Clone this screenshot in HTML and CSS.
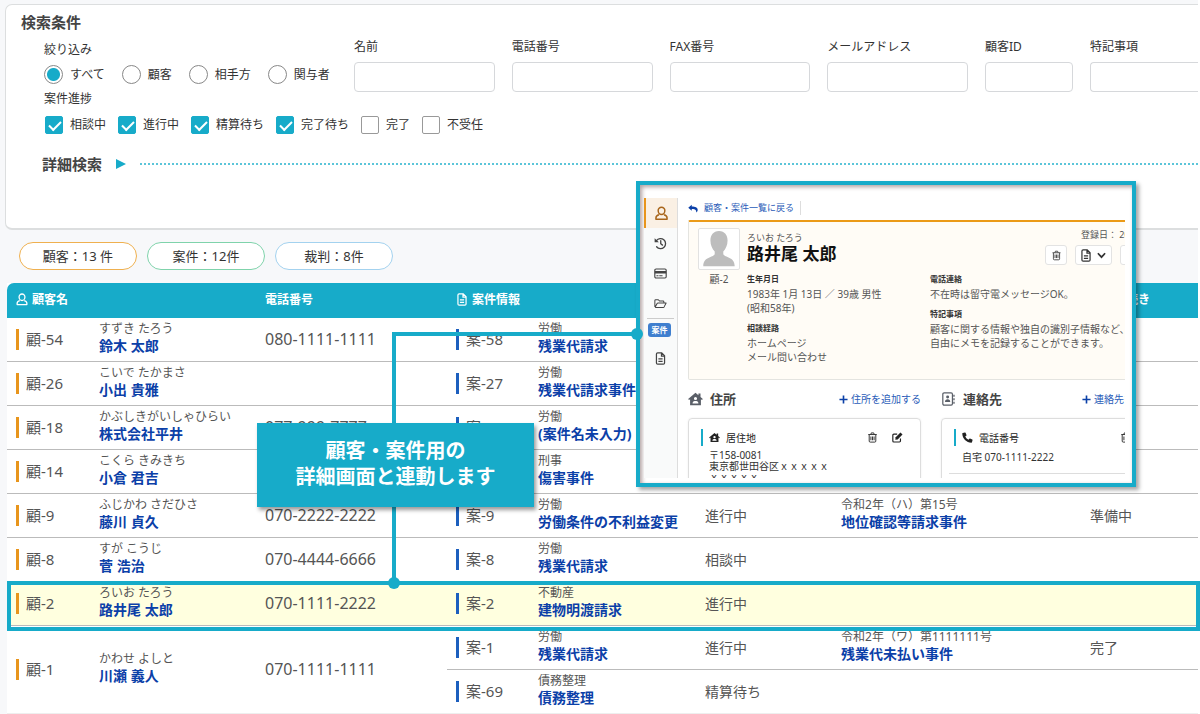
FILE: index.html
```html
<!DOCTYPE html>
<html lang="ja">
	<head>
		<meta charset="utf-8">
		<title>顧客・案件一覧</title>
		<link rel="stylesheet" href="styles.css">
	</head>
	<body>
		<!-- shared icons -->
		<svg class="sprite" xmlns="http://www.w3.org/2000/svg">
			<symbol id="i-user" viewBox="0 0 14 16">
				<path d="M7 1.200A3.600 3.600 0 0 1 10.600 4.900C10.600 7.200 9 9.200 7 9.200S3.400 7.200 3.400 4.900A3.600 3.600 0 0 1 7 1.200Z M4.300 9.300C2.300 9.800 1 11 1 12.800V14.300H13V12.800C13 11 11.700 9.800 9.700 9.300" fill="none" stroke="currentColor" stroke-width="1.600" stroke-linejoin="round"/>
			</symbol>
			<symbol id="i-doc" viewBox="0 0 12 16">
				<path d="M2.500 1H7.500L11 4.500V13.500A1.500 1.500 0 0 1 9.500 15H2.500A1.500 1.500 0 0 1 1 13.500V2.500A1.500 1.500 0 0 1 2.500 1Z M7.200 1V5H11 M3.400 8.500H8.600 M3.400 11.500H8.600" fill="none" stroke="currentColor" stroke-width="1.500"/>
			</symbol>
			<symbol id="i-history" viewBox="0 0 16 16">
				<path d="M3 4.500A6.200 6.200 0 1 1 3.200 12 M8.300 4.500V8.300L10.500 10" fill="none" stroke="currentColor" stroke-width="1.600" stroke-linecap="round"/>
				<path d="M.8 1.500V6.600H6Z" fill="currentColor"/>
			</symbol>
			<symbol id="i-card" viewBox="0 0 16 14">
				<rect x="1" y="1.500" width="14" height="11" rx="1.500" fill="none" stroke="currentColor" stroke-width="1.400"/>
				<path d="M1 4H15V7H1Z M3 9.300H5.500V10.500H3Z M6.500 9.300H10.500V10.500H6.500Z" fill="currentColor"/>
			</symbol>
			<symbol id="i-folder" viewBox="0 0 18 14">
				<path d="M1.200 12V3A1.200 1.200 0 0 1 2.400 1.800H6L7.800 3.600H12.500A1.200 1.200 0 0 1 13.700 4.800V6.200 M1.500 12.300L4.500 6.800Q4.900 6.200 5.500 6.200H16.800L14 11.700Q13.600 12.400 13 12.400H1.500" fill="none" stroke="currentColor" stroke-width="1.400" stroke-linejoin="round"/>
			</symbol>
			<symbol id="i-reply" viewBox="0 0 16 14">
				<path d="M.4 5.600L6 .8V3.600C11.500 3.700 15.500 5 15.500 9C15.500 11 14.500 12.500 13 13.500C13.800 10 12 8 6 7.900V10.500Z" fill="currentColor"/>
			</symbol>
			<symbol id="i-trash" viewBox="0 0 14 16">
				<path d="M.8 3.700H13.200 M4.500 3.500L5.300 1.300H8.700L9.500 3.500 M2.200 4V13.200A1.500 1.500 0 0 0 3.700 14.700H10.300A1.500 1.500 0 0 0 11.800 13.200V4 M4.700 6.500V12 M7 6.500V12 M9.300 6.500V12" fill="none" stroke="currentColor" stroke-width="1.300"/>
			</symbol>
			<symbol id="i-edit" viewBox="0 0 16 16">
				<path d="M12.300 9.500V13A1.500 1.500 0 0 1 10.800 14.500H2.700A1.500 1.500 0 0 1 1.200 13V4.700A1.500 1.500 0 0 1 2.700 3.200H7.500" fill="none" stroke="currentColor" stroke-width="1.700"/>
				<path d="M12.300.8L15.300 3.800L8.300 10.800L4.800 11.300L5.300 7.800Z" fill="currentColor"/>
			</symbol>
			<symbol id="i-home" viewBox="0 0 18 16">
				<path fill-rule="evenodd" d="M9 .5L12.500 3.400V1.500H15V5.600L17.800 8L16.800 9.200L15.500 8.200V15.500H2.500V8.200L1.200 9.200L.2 8ZM9 5.500A1.900 1.900 0 1 0 9 9.300A1.900 1.900 0 1 0 9 5.500ZM5.500 13.500H12.500C12.500 11.500 11.500 10.300 10 10.300H8C6.500 10.300 5.500 11.500 5.500 13.500Z" fill="currentColor"/>
			</symbol>
			<symbol id="i-book" viewBox="0 0 15 16">
				<rect x="1" y="1" width="11" height="14" rx="1.500" fill="none" stroke="currentColor" stroke-width="1.400"/>
				<path d="M6.500 4A1.700 1.700 0 1 1 6.500 7.400A1.700 1.700 0 1 1 6.500 4Z M3.500 11.500C3.500 9.300 4.500 8.300 6.500 8.300S9.500 9.300 9.500 11.500Z M13 3H14.500V5.500H13Z M13 7H14.500V9.500H13Z M13 11H14.500V13.500H13Z" fill="currentColor"/>
			</symbol>
			<symbol id="i-phone" viewBox="0 0 16 16">
				<path d="M1 1.500L4.200.6Q4.900.4 5.200 1.100L6.500 4.300Q6.700 4.900 6.200 5.300L4.700 6.600Q6.300 9.800 9.400 11.300L10.700 9.800Q11.100 9.300 11.700 9.500L14.900 10.800Q15.600 11.100 15.400 11.800L14.500 15Q14.300 15.600 13.700 15.600C6.500 15.600.4 9.500.4 2.300Q.4 1.700 1 1.500Z" fill="currentColor"/>
			</symbol>
			<symbol id="i-plus" viewBox="0 0 10 10">
				<path d="M5 .5V9.500 M.5 5H9.500" stroke="currentColor" stroke-width="1.800"/>
			</symbol>
			<symbol id="i-chevron" viewBox="0 0 10 8">
				<path d="M1 1.500L5 5.800L9 1.500" fill="none" stroke="currentColor" stroke-width="1.900"/>
			</symbol>
		</svg>

		<div class="stage">
			<form class="search">
				<h2>検索条件</h2>
				<div class="search-top">
					<fieldset class="target">
						<legend>絞り込み</legend>
						<div class="choices radios">
							<label><input type="radio" name="target" checked>すべて</label>
							<label><input type="radio" name="target">顧客</label>
							<label><input type="radio" name="target">相手方</label>
							<label><input type="radio" name="target">関与者</label>
						</div>
					</fieldset>
					<div class="fields">
						<label>名前<input type="text"></label>
						<label>電話番号<input type="text"></label>
						<label>FAX番号<input type="text"></label>
						<label>メールアドレス<input type="text"></label>
						<label>顧客ID<input type="text"></label>
						<label>特記事項<input type="text" class="cut"></label>
					</div>
				</div>
				<fieldset class="progress">
					<legend>案件進捗</legend>
					<div class="choices checks">
						<label><input type="checkbox" checked>相談中</label>
						<label><input type="checkbox" checked>進行中</label>
						<label><input type="checkbox" checked>精算待ち</label>
						<label><input type="checkbox" checked>完了待ち</label>
						<label><input type="checkbox">完了</label>
						<label><input type="checkbox">不受任</label>
					</div>
				</fieldset>
				<div class="detail">
					<h3>詳細検索</h3>
					<span class="arrow"></span>
					<span class="dots"></span>
				</div>
			</form>

			<div class="tallies">
				<span class="tally orange">顧客：13 件</span>
				<span class="tally green">案件：12件</span>
				<span class="tally blue">裁判：8件</span>
			</div>

			<table class="list">
				<colgroup>
					<col class="c-id">
					<col class="c-name">
					<col class="c-phone">
					<col class="c-case">
					<col class="c-matter">
					<col class="c-status">
					<col class="c-court">
					<col>
				</colgroup>
				<thead>
					<tr>
						<th colspan="2" class="pad"><svg><use href="#i-user"/></svg>顧客名</th>
						<th>電話番号</th>
						<th colspan="2" class="pad"><svg><use href="#i-doc"/></svg>案件情報</th>
						<th></th>
						<th></th>
						<th>裁判手続き</th>
					</tr>
				</thead>
				<tbody>
					<tr>
						<td class="pad"><span class="id">顧-54</span></td>
						<td><small>すずき たろう</small><a href="#">鈴木 太郎</a></td>
						<td class="tel">080-1111-1111</td>
						<td class="pad"><span class="id case">案-58</span></td>
						<td><small>労働</small><a href="#">残業代請求</a></td>
						<td></td>
						<td></td>
						<td></td>
					</tr>
					<tr>
						<td class="pad"><span class="id">顧-26</span></td>
						<td><small>こいで たかまさ</small><a href="#">小出 貴雅</a></td>
						<td class="tel"></td>
						<td class="pad"><span class="id case">案-27</span></td>
						<td><small>労働</small><a href="#">残業代請求事件</a></td>
						<td></td>
						<td></td>
						<td></td>
					</tr>
					<tr>
						<td class="pad"><span class="id">顧-18</span></td>
						<td><small>かぶしきがいしゃひらい</small><a href="#">株式会社平井</a></td>
						<td class="tel">077-999-7777</td>
						<td class="pad"><span class="id case">案-20</span></td>
						<td><small>労働</small><a href="#">(案件名未入力)</a></td>
						<td></td>
						<td></td>
						<td></td>
					</tr>
					<tr>
						<td class="pad"><span class="id">顧-14</span></td>
						<td><small>こくら きみきち</small><a href="#">小倉 君吉</a></td>
						<td class="tel"></td>
						<td class="pad"></td>
						<td><small>刑事</small><a href="#">傷害事件</a></td>
						<td></td>
						<td></td>
						<td></td>
					</tr>
					<tr>
						<td class="pad"><span class="id">顧-9</span></td>
						<td><small>ふじかわ さだひさ</small><a href="#">藤川 貞久</a></td>
						<td class="tel">070-2222-2222</td>
						<td class="pad"><span class="id case">案-9</span></td>
						<td><small>労働</small><a href="#">労働条件の不利益変更</a></td>
						<td>進行中</td>
						<td><small>令和2年（ハ）第15号</small><a href="#">地位確認等請求事件</a></td>
						<td>準備中</td>
					</tr>
					<tr>
						<td class="pad"><span class="id">顧-8</span></td>
						<td><small>すが こうじ</small><a href="#">菅 浩治</a></td>
						<td class="tel">070-4444-6666</td>
						<td class="pad"><span class="id case">案-8</span></td>
						<td><small>労働</small><a href="#">残業代請求</a></td>
						<td>相談中</td>
						<td></td>
						<td></td>
					</tr>
					<tr class="picked">
						<td class="pad"><span class="frame"></span><span class="id">顧-2</span></td>
						<td><small>ろいお たろう</small><a href="#">路井尾 太郎</a></td>
						<td class="tel">070-1111-2222</td>
						<td class="pad"><span class="id case">案-2</span></td>
						<td><small>不動産</small><a href="#">建物明渡請求</a></td>
						<td>進行中</td>
						<td></td>
						<td></td>
					</tr>
					<tr>
						<td rowspan="2" class="pad"><span class="id">顧-1</span></td>
						<td rowspan="2"><small>かわせ よしと</small><a href="#">川瀬 義人</a></td>
						<td rowspan="2" class="tel">070-1111-1111</td>
						<td class="pad"><span class="id case">案-1</span></td>
						<td><small>労働</small><a href="#">残業代請求</a></td>
						<td>進行中</td>
						<td><small>令和2年（ワ）第1111111号</small><a href="#">残業代未払い事件</a></td>
						<td>完了</td>
					</tr>
					<tr>
						<td class="pad"><span class="id case">案-69</span></td>
						<td><small>債務整理</small><a href="#">債務整理</a></td>
						<td>精算待ち</td>
						<td></td>
						<td></td>
					</tr>
				</tbody>
			</table>

			<!-- line from the picked row to the detail window -->
			<div class="wire"></div>
			<p class="callout">顧客・案件用の<br>詳細画面と連動します</p>

			<section class="popup">
				<div class="view">
					<nav class="side">
						<a href="#" class="on" aria-label="顧客"><svg class="s-user"><use href="#i-user"/></svg></a>
						<a href="#" aria-label="履歴"><svg><use href="#i-history"/></svg></a>
						<a href="#" aria-label="会計"><svg><use href="#i-card"/></svg></a>
						<a href="#" aria-label="フォルダ"><svg><use href="#i-folder"/></svg></a>
						<span class="badge">案件</span>
						<a href="#" aria-label="書類"><svg><use href="#i-doc"/></svg></a>
					</nav>
					<div class="main">
						<a href="#" class="back"><svg><use href="#i-reply"/></svg>顧客・案件一覧に戻る</a>
						<div class="profile">
							<div class="face">
								<svg viewBox="0 0 42 42">
									<path d="M21 2C27 2 30 6.500 30 12C30 17 28 21 25.500 23.500V26.500C27 30 37.500 29 37.500 39H4.500C4.500 29 15 30 16.500 26.500V23.500C14 21 12 17 12 12C12 6.500 15 2 21 2Z" fill="#bdbdbd"/>
								</svg>
								<span>顧-2</span>
							</div>
							<div class="about">
								<div class="about-head">
									<div>
										<p class="kana">ろいお たろう</p>
										<h1>路井尾 太郎</h1>
									</div>
									<div class="tools">
										<p>登録日： 20</p>
										<div>
											<button type="button" aria-label="削除"><svg><use href="#i-trash"/></svg></button>
											<button type="button" class="wide" aria-label="書類"><svg class="t-doc"><use href="#i-doc"/></svg><svg><use href="#i-chevron"/></svg></button>
											<button type="button" class="wide" aria-label="その他"></button>
										</div>
									</div>
								</div>
								<div class="facts">
									<dl>
										<dt>生年月日</dt>
										<dd>1983年 1月 13日 ／ 39歳 男性<br>(昭和58年)</dd>
										<dt>相談経路</dt>
										<dd>ホームページ<br>メール問い合わせ</dd>
									</dl>
									<dl>
										<dt>電話連絡</dt>
										<dd>不在時は留守電メッセージOK。</dd>
										<dt>特記事項</dt>
										<dd>顧客に関する情報や独自の識別子情報など、<br>自由にメモを記録することができます。</dd>
									</dl>
								</div>
							</div>
						</div>
						<div class="blocks">
							<div>
								<div class="block-head">
									<svg><use href="#i-home"/></svg>
									<h4>住所</h4>
									<a href="#"><svg><use href="#i-plus"/></svg>住所を追加する</a>
								</div>
								<div class="card">
									<div class="card-head">
										<svg><use href="#i-home"/></svg>
										<span>居住地</span>
										<svg class="act"><use href="#i-trash"/></svg>
										<svg><use href="#i-edit"/></svg>
									</div>
									<p class="address">〒158-0081<br>東京都世田谷区ｘｘｘｘｘ<br>ｘｘｘｘｘ</p>
								</div>
							</div>
							<div>
								<div class="block-head">
									<svg><use href="#i-book"/></svg>
									<h4>連絡先</h4>
									<a href="#"><svg><use href="#i-plus"/></svg>連絡先を追加する</a>
								</div>
								<div class="card">
									<div class="card-head">
										<svg><use href="#i-phone"/></svg>
										<span>電話番号</span>
										<svg class="act"><use href="#i-trash"/></svg>
										<svg><use href="#i-edit"/></svg>
									</div>
									<p class="number">自宅 070-1111-2222</p>
								</div>
							</div>
						</div>
					</div>
				</div>
			</section>
		</div>
	</body>
</html>
```
FILE: styles.css
```css
* {
	box-sizing: border-box;
}
body {
	margin: 0;
	background: #fff;
	color: #333;
	font-family: "Noto Sans", "Noto Sans CJK JP", sans-serif;
	font-size: 12px;
	overflow: hidden;
}
h1,
h2,
h3,
h4,
p,
dl,
dd {
	margin: 0;
}
a {
	color: #0b40a8;
	text-decoration: none;
}
fieldset {
	border: none;
	margin: 0;
	padding: 0;
	min-width: 0;
}
legend {
	padding: 0;
}
.sprite {
	display: none;
}
.stage {
	position: relative;
	margin-right: 2px;
	padding: 4px 0 0 5px;
	background: #f7f8fa;
}

/* search panel */
.search {
	border: 1px solid #dcdedf;
	border-bottom-width: 2px;
	border-right: none;
	border-radius: 7px 0 0 7px;
	background: #fff;
	padding: 8px 0 55px 38px;
}
.search h2,
.search h3 {
	font-size: 15px;
	line-height: 18px;
	color: #444;
}
.search h2 {
	margin-left: -23px;
}
.search-top {
	display: flex;
	margin-top: 8px;
}
.target {
	flex: 0 0 310px;
}
.target legend {
	padding-top: 3px;
	line-height: 16px;
}
.choices {
	display: flex;
}
.choices label {
	display: flex;
	align-items: center;
	gap: 7px;
	line-height: 18px;
	white-space: nowrap;
}
.choices input {
	appearance: none;
	margin: 0;
	border: 1px solid #888;
	background: #fff;
}
.radios {
	gap: 17px;
	margin-top: 7px;
}
.radios input {
	width: 19px;
	height: 19px;
	border-radius: 50%;
}
.radios input:checked {
	background: radial-gradient(circle, #17abc9 6px, #fff 7px);
}
.fields {
	flex: 1;
	display: grid;
	grid-template-columns: repeat(4, 1fr) 88px 108px;
	gap: 17px;
}
.fields label {
	line-height: 16px;
}
.fields input {
	display: block;
	width: 100%;
	height: 30px;
	margin-top: 7px;
	border: 1px solid #d6d8db;
	border-radius: 4px;
	background: #fff;
}
.fields .cut {
	border-right: none;
	border-radius: 4px 0 0 4px;
}
.progress legend {
	line-height: 14px;
}
.checks {
	gap: 12px;
	margin: 10px 0 0 1px;
}
.checks input {
	width: 18px;
	height: 18px;
	border-color: #999;
	border-radius: 2px;
}
.checks input:checked {
	border-color: #17abc9;
	background: #17abc9;
	position: relative;
}
.checks input:checked::after {
	content: "";
	position: absolute;
	left: 3px;
	top: 4px;
	width: 10px;
	height: 5px;
	border-left: 2px solid #fff;
	border-bottom: 2px solid #fff;
	transform: rotate(-45deg);
}
.detail {
	display: flex;
	align-items: center;
	margin: 21px 0 0 -2px;
}
.arrow {
	border: 5px solid transparent;
	border-left: 10px solid #17abc9;
	border-right: none;
	margin: 0 14px;
}
.dots {
	flex: 1;
	border-top: 2px dotted #5cc5d9;
}

/* counts */
.tallies {
	display: flex;
	gap: 10px;
	padding: 12px 14px 13px;
}
.tally {
	width: 118px;
	height: 28px;
	border: 1px solid;
	border-radius: 14px;
	background: #fff;
	font-size: 13px;
	line-height: 26px;
	text-align: center;
}
.orange {
	border-color: #efb04f;
}
.green {
	border-color: #7fd3ab;
}
.blue {
	border-color: #a3d2ef;
}

/* list */
.list {
	width: calc(100% - 2px);
	margin-left: 2px;
	table-layout: fixed;
	border-collapse: separate;
	border-spacing: 0;
	background: #fff;
	color: #555;
	font-size: 14px;
}
.c-id {
	width: 92px;
}
.c-name {
	width: 166px;
}
.c-phone {
	width: 182px;
}
.c-case {
	width: 91px;
}
.c-matter {
	width: 167px;
}
.c-status {
	width: 136px;
}
.c-court {
	width: 249px;
}
.list th {
	height: 35px;
	padding: 0 0 3px;
	background: #17abc9;
	color: #fff;
	font-size: 12px;
	text-align: left;
}
.list th:first-child {
	border-radius: 7px 0 0 0;
}
.list th svg {
	width: 12px;
	height: 13px;
	margin-right: 4px;
	vertical-align: -2px;
}
.list td {
	height: 44px;
	padding: 0 0 2px;
	border-bottom: 1px solid #bbb;
	white-space: nowrap;
}
.list .pad {
	padding-left: 9px;
}
.list td.pad {
	padding-bottom: 0;
}
.list small {
	display: block;
	font-size: 12px;
	line-height: 17px;
}
.list td a {
	display: block;
	padding-bottom: 2px;
	font-weight: bold;
	line-height: 18px;
}
.list .tel {
	font-size: 16px;
}
.list tr:last-child td,
.list td[rowspan] {
	border-bottom-color: #eee;
}
.id {
	display: block;
	border-left: 3px solid #e8951c;
	padding-left: 7px;
	font-size: 15px;
	line-height: 21px;
}
.case {
	border-color: #1c5fbe;
}
.picked {
	position: relative;
	background: #ffffdf;
}
.frame {
	position: absolute;
	inset: -1px -2px -5px 0;
	border: 4px solid #17abc9;
}

/* connector */
.wire {
	position: absolute;
	left: 392px;
	top: 332px;
	width: 245px;
	height: 251px;
	border: solid #17abc9;
	border-width: 4px 0 0 4px;
}
.wire::after,
.popup::before {
	content: "";
	position: absolute;
	width: 12px;
	height: 12px;
	border-radius: 50%;
	background: #17abc9;
}
.wire::after {
	left: -8px;
	bottom: -6px;
}
.callout {
	position: absolute;
	left: 257px;
	top: 423px;
	width: 277px;
	padding: 15px 0 17px;
	background: #17abc9;
	box-shadow: 2px 3px 4px rgba(0, 0, 0, 0.4);
	color: #fff;
	font-size: 20px;
	font-weight: bold;
	line-height: 26px;
	text-align: center;
}

/* detail window */
.popup {
	position: absolute;
	left: 636px;
	top: 181px;
	width: 500px;
	height: 306px;
	padding: 13px 7px 5px 4px;
	border: 4px solid #17abc9;
	background: #fff;
	box-shadow: 3px 3px 4px rgba(0, 0, 0, 0.35), inset 2px 2px 4px rgba(60, 20, 20, 0.4);
	color: #555;
	font-size: 10px;
	line-height: 14px;
}
.popup::before {
	left: -9px;
	top: 143px;
}
.view {
	display: flex;
	height: 100%;
	overflow: hidden;
}
.side {
	flex: 0 0 34px;
	border-right: 1px solid #ddd;
	background: #f9fafa;
}
.side a {
	display: flex;
	height: 30px;
	align-items: center;
	justify-content: center;
	color: #444;
}
.side svg {
	width: 13px;
	height: 13px;
}
.side .on {
	border-left: 2px solid #e8951c;
	background: #faf0e4;
	color: #a8651a;
}
.side .s-user {
	height: 15px;
}
.badge {
	position: relative;
	display: block;
	margin: 5px 6px 6px 4px;
	border-radius: 3px;
	background: #3f7fcf;
	color: #fff;
	font-size: 8px;
	font-weight: bold;
	line-height: 14px;
	text-align: center;
}
.badge::before {
	content: "";
	position: absolute;
	left: -1px;
	right: -3px;
	top: -5px;
	border-top: 1px solid #ccc;
}
.main {
	flex: 0 0 486px;
	margin-left: 10px;
}
.back {
	display: flex;
	align-items: center;
	gap: 6px;
	width: 113px;
	height: 14px;
	margin: 3px 0 5px;
	border-right: 1px solid #ddd;
	color: #2a5cb8;
	font-size: 9px;
	white-space: nowrap;
}
.back svg {
	width: 10px;
	height: 9px;
	color: #0b40a8;
}
.profile {
	display: flex;
	gap: 7px;
	height: 160px;
	padding: 6px 0 0 9px;
	border: 1px solid #e4e4e0;
	border-top: 2px solid #eb9a17;
	border-radius: 2px;
	background: #fffcf6;
}
.face {
	width: 42px;
	text-align: center;
}
.face svg {
	display: block;
	width: 42px;
	height: 42px;
	margin-bottom: 2px;
	border: 1px solid #e2e2e2;
	border-radius: 2px;
	background: #fff;
}
.about {
	flex: 1;
	padding-top: 4px;
}
.about-head {
	display: flex;
	justify-content: space-between;
}
.kana {
	font-size: 9px;
	line-height: 12px;
}
h1 {
	color: #111;
	font-size: 17px;
	line-height: 20px;
}
.tools {
	width: 128px;
	margin-top: -4px;
}
.tools p {
	padding-left: 36px;
	font-size: 9px;
	line-height: 14px;
	white-space: nowrap;
}
.tools div {
	display: flex;
	gap: 8px;
	margin-top: 3px;
}
.tools button {
	display: flex;
	flex: none;
	align-items: center;
	justify-content: center;
	gap: 6px;
	width: 22px;
	height: 20px;
	padding: 0;
	border: 1px solid #e3e3e3;
	border-radius: 3px;
	background: #fff;
	color: #333;
}
.tools .wide {
	width: 37px;
}
.tools svg {
	width: 9px;
	height: 11px;
}
.tools .t-doc {
	width: 10px;
	height: 13px;
}
.facts {
	display: grid;
	grid-template-columns: 183px 1fr;
	margin-top: 8px;
	white-space: nowrap;
}
dt {
	margin-bottom: 2px;
	color: #333;
	font-size: 8px;
	font-weight: bold;
	line-height: 12px;
}
dd {
	margin-bottom: 7px;
}
.blocks {
	display: grid;
	grid-template-columns: 233px 233px;
	gap: 20px;
}
.block-head {
	display: flex;
	align-items: center;
	height: 38px;
	color: #5a5f68;
}
.block-head svg {
	width: 15px;
	height: 14px;
}
.block-head h4 {
	flex: 1;
	margin-left: 7px;
	color: #444;
	font-size: 13px;
}
.block-head a {
	display: flex;
	align-items: center;
	gap: 3px;
	color: #2a5cb8;
}
.block-head a svg {
	width: 9px;
	height: 9px;
	color: #0b40a8;
}
.card {
	height: 90px;
	padding: 10px 12px;
	border: 1px solid #ddd;
	border-radius: 4px;
	box-shadow: 0 0 2px rgba(0, 0, 0, 0.08);
	color: #333;
}
.card-head {
	display: flex;
	align-items: center;
	height: 17px;
	padding: 0 5px 0 6px;
	border-left: 2px solid #17abc9;
	color: #222;
}
.card-head svg {
	width: 11px;
	height: 11px;
}
.card-head span {
	margin-left: 6px;
}
.card-head .act {
	margin: 0 14px 0 auto;
}
.address {
	margin: 4px 8px;
	line-height: 11px;
}
.number {
	margin: 4px -5px;
	padding: 0 13px 9px;
	border-bottom: 1px solid #ddd;
}
```
